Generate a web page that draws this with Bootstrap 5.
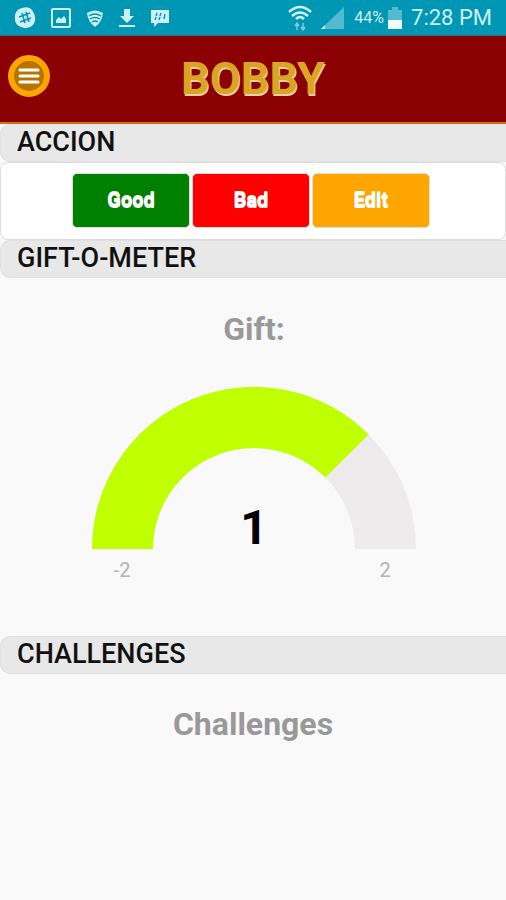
<!DOCTYPE html>
<html lang="en">
<head>
<meta charset="utf-8">
<meta name="viewport" content="width=device-width, initial-scale=1">
<title>Bobby</title>
<link href="https://cdn.jsdelivr.net/npm/bootstrap@5.3.0/dist/css/bootstrap.min.css" rel="stylesheet">
<style>
  body { font-family: Roboto, "Liberation Sans", sans-serif; background: #f9f9f9; color: #111; }
  .status-bar { height: 36px; padding: 0 14px; background: #0097b5; color: #cdeff6; border-bottom: 1px solid #3d6678; }
  .status-bar svg { display: block; }
  .status-icons { gap: 15px; }
  .status-info { gap: 9px; }
  .status-pct { font-size: 16px; line-height: 20px; }
  .status-time { font-size: 22px; line-height: 28px; }
  .app-header { display: grid; grid-template-columns: 50px 1fr 50px; height: 88px; padding: 0 8px; background: #8b0000; border-bottom: 2px solid #c8761c; }
  .menu-btn { width: 42px; height: 42px; margin-bottom: 6px; border: 6px solid #ffa500; background: #b87400; }
  .app-title { font-size: 45px; line-height: 48px; font-weight: 700; color: #daa520; text-shadow: 1px 2px 0 #f0cfa8; }
  .section-bar { height: 38px; padding: 0 16px; border: 1px solid #e0e0e0; border-right: 0; border-radius: 10px 0 0 10px; background: #e8e8e8; font-size: 27px; line-height: 35px; font-weight: 500; }
  .action-panel { gap: 2px; padding: 10px 4px 11px 0; border: 1px solid #ddd; border-radius: 8px; background: #fff; }
  .action-btn { width: 118px; height: 55px; padding: 0 0 2px; border: 1px solid #ddd; border-radius: 5px; font-size: 20px; font-weight: 700; color: #fff; text-shadow: 0 1px 0 #fff, 0 -1px 0 #fff; }
  .action-btn:hover { color: #fff; }
  .good { background: green; }
  .bad { background: red; }
  .edit { background: orange; }
  .chart-title { font-size: 32px; line-height: 38px; font-weight: 700; color: #999; }
  .gauge-block { padding: 32px 0 47px 2px; }
  .gauge { display: block; width: 324px; margin: 39px auto 0; }
  .challenge-block { padding-top: 31px; }
</style>
<script src="https://cdn.jsdelivr.net/npm/bootstrap@5.3.0/dist/js/bootstrap.bundle.min.js"></script>
</head>
<body>
<div class="status-bar d-flex align-items-center justify-content-between">
  <div class="status-icons d-flex align-items-center">
    <svg width="22" height="22" viewBox="0 0 22 22" aria-label="Chat"><path d="M8 1Q15-1 18 3Q24 11 19 18Q14 23 7 20Q1 18 1 12Q0 3 8 1Z" fill="#cdeff6"/><path d="M8 6l3 10M12 5l3 10M5 10l11-4M6 15l11-4" stroke="#0097b5" stroke-width="1.6"/></svg>
    <svg width="20" height="20" viewBox="0 0 20 20" aria-label="Picture"><rect x="1" y="1" width="18" height="18" rx="1" fill="none" stroke="#cdeff6" stroke-width="2"/><path d="M5 15v-3l3-3 2 2 3-3 2 3v4z" fill="#cdeff6"/></svg>
    <svg width="18" height="18" viewBox="0 0 18 18" aria-label="Network"><path d="M1 4Q9-1 17 4Q16 13 9 18Q2 13 1 4Z" fill="#cdeff6"/><path d="M3 7Q9 3 15 7M4 10Q9 7 14 10M6 13Q9 11 12 13" fill="none" stroke="#0097b5" stroke-width="1.4"/></svg>
    <svg width="16" height="20" viewBox="0 0 16 20" aria-label="Download"><path d="M5 1h6v7h4l-7 7-7-7h4zM0 17h16v2H0z" fill="#cdeff6"/></svg>
    <svg width="20" height="18" viewBox="0 0 20 18" aria-label="Messenger"><path d="M1 1h18v13H8l-4 4v-4H1z" fill="#cdeff6"/><path d="M7 4l-1 3M11 4l-1 3M6 8l-1 3M10 8l-1 3M15 5l-1 5" stroke="#0097b5" stroke-width="1.4"/></svg>
  </div>
  <div class="status-info d-flex align-items-center">
    <svg width="24" height="26" viewBox="0 0 24 26" aria-label="Wi-Fi"><path d="M1 7Q12-3 23 7M4 11Q12 4 20 11M8 14Q12 10 16 14" fill="none" stroke="#cdeff6" stroke-width="2.5"/><path d="M9 25v-6M7 21l2-3 2 3M15 18v6M13 22l2 3 2-3" fill="none" stroke="#7ccbdc" stroke-width="1.5"/></svg>
    <svg width="24" height="24" viewBox="0 0 24 24" aria-label="Signal"><path d="M23 1v22H0z" fill="#55b9cf"/><path d="M4 19v4H0z" fill="#cdeff6"/></svg>
    <span class="d-flex align-items-center gap-1">
      <span class="status-pct">44%</span>
      <svg width="14" height="24" viewBox="0 0 14 24" aria-label="Battery"><path d="M4 1h6v3h4v10H0V4h4z" fill="#55b9cf"/><path d="M0 14h14v9H0z" fill="#f0fbfd"/></svg>
    </span>
    <span class="status-time">7:28 PM</span>
  </div>
</div>

<header class="app-header align-items-center">
  <button type="button" class="menu-btn rounded-circle p-0 d-flex align-items-center justify-content-center" aria-label="Menu">
    <svg width="22" height="18" viewBox="0 0 22 18"><path d="M2 3h18M2 9h18M2 15h18" stroke="#fff" stroke-width="3" stroke-linecap="round"/></svg>
  </button>
  <h1 class="app-title text-center m-0">BOBBY</h1>
</header>

<main>
  <h2 class="section-bar m-0">ACCION</h2>
  <div class="action-panel d-flex justify-content-center">
    <button type="button" class="btn action-btn good">Good</button>
    <button type="button" class="btn action-btn bad">Bad</button>
    <button type="button" class="btn action-btn edit">Edit</button>
  </div>

  <h2 class="section-bar m-0">GIFT-O-METER</h2>
  <div class="gauge-block">
    <h3 class="chart-title text-center m-0">Gift:</h3>
    <svg class="gauge" viewBox="0 0 324 202" role="img" aria-label="Gift: 1, from -2 to 2">
      <path d="M0 162A162 162 0 0 1 324 162H263A101 101 0 0 0 61 162Z" fill="#edebeb"/>
      <path d="M0 162A162 162 0 0 1 276.6 47.4L233.4 90.6A101 101 0 0 0 61 162Z" fill="#bfff00"/>
      <g text-anchor="middle">
        <text x="162" y="157" font-size="48" font-weight="700" fill="#000">1</text>
        <text x="30" y="190" font-size="20" fill="#b3b3b3">-2</text>
        <text x="293" y="190" font-size="20" fill="#b3b3b3">2</text>
      </g>
    </svg>
  </div>

  <h2 class="section-bar m-0">CHALLENGES</h2>
  <div class="challenge-block">
    <h3 class="chart-title text-center m-0">Challenges</h3>
  </div>
</main>
</body>
</html>
